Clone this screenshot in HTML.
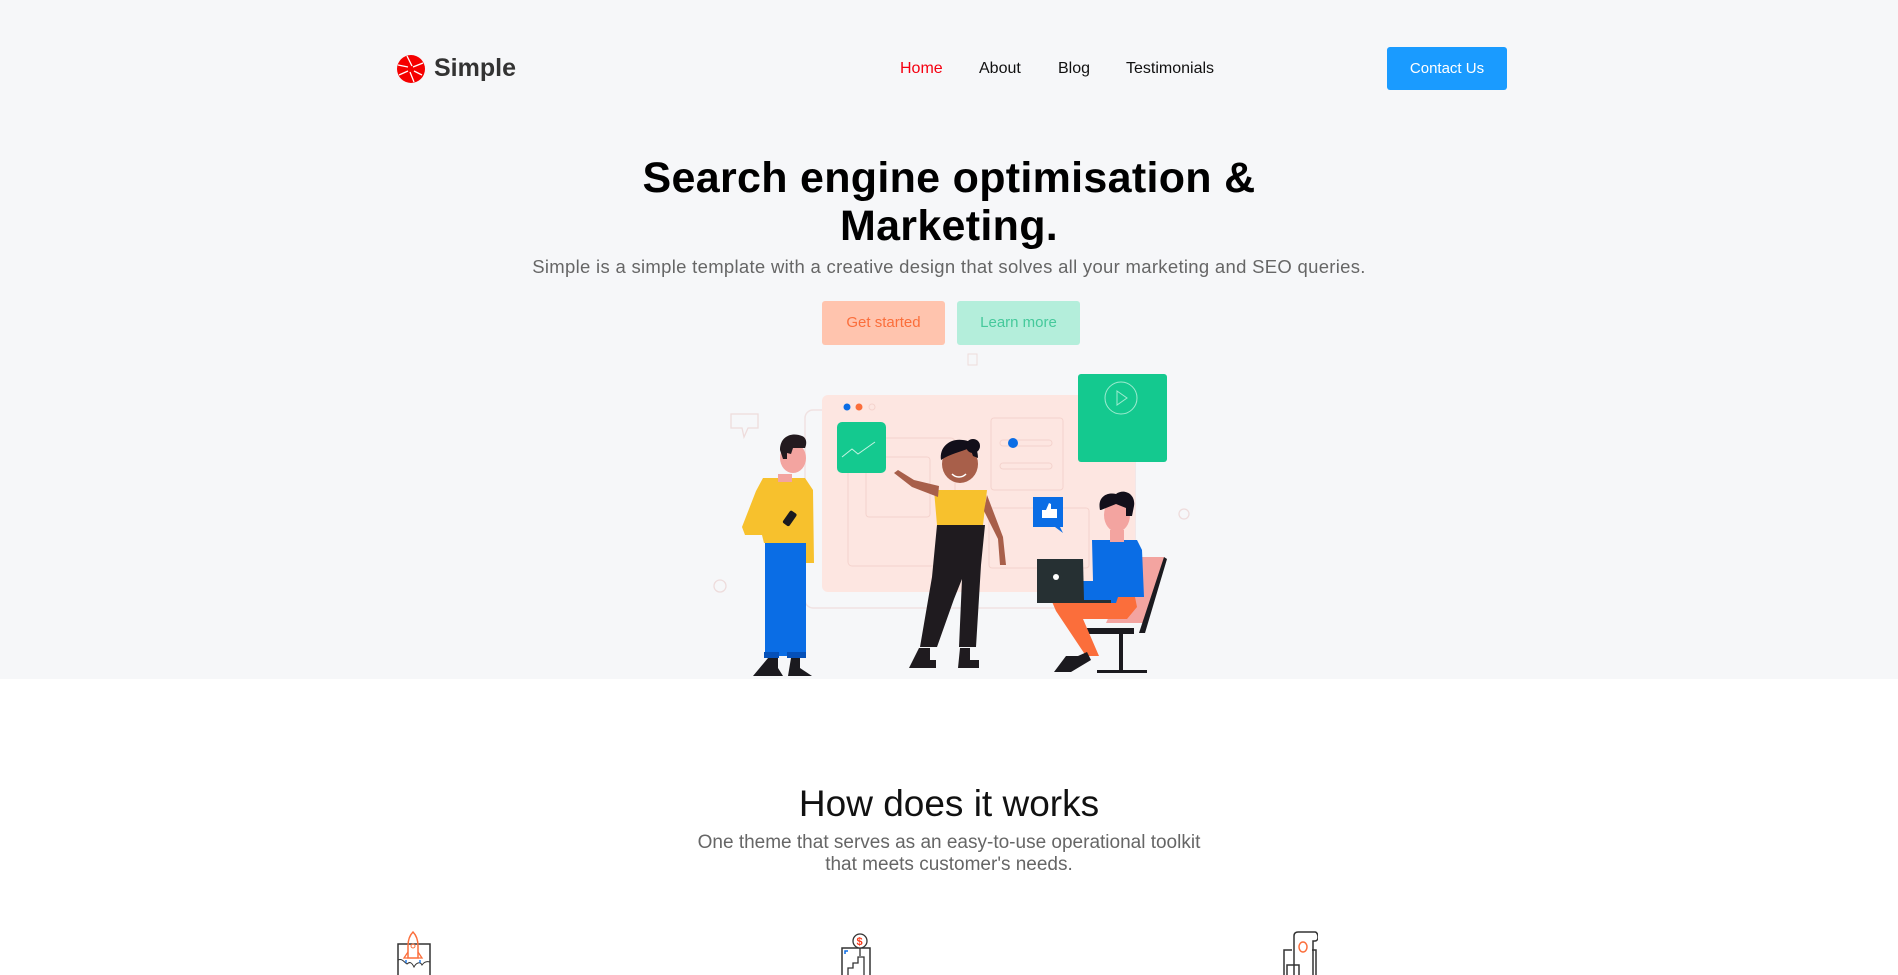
<!DOCTYPE html>
<html><head><meta charset="utf-8"><style>
*{margin:0;padding:0;box-sizing:border-box}
body{width:1898px;height:975px;overflow:hidden;background:#fff;font-family:"Liberation Sans",sans-serif;position:relative}
.hero{position:absolute;left:0;top:0;width:1898px;height:679px;background:#f6f7f9}
.a{position:absolute}
.nav{font-size:16px;color:#111;top:60px}
h1{position:absolute;left:0;width:1898px;top:154px;text-align:center;font-size:43px;line-height:48px;font-weight:bold;color:#000;letter-spacing:0.3px}
.sub{left:0;width:1898px;text-align:center;top:256px;font-size:18.5px;letter-spacing:0.3px;color:#666}
.btn{top:301px;height:44px;width:123px;text-align:center;line-height:44px;font-size:15px;border-radius:3px}
</style></head><body>
<div class="hero"></div>
<svg class="a" style="left:396px;top:54px" width="30" height="30" viewBox="0 0 30 30"><circle cx="15" cy="15" r="14" fill="#f50000"/><g stroke="#fff" stroke-width="1.3"><line x1="11" y1="2" x2="16" y2="12"/><line x1="27" y1="9" x2="17" y2="13"/><line x1="26" y1="21" x2="18" y2="17"/><line x1="18" y1="28" x2="14" y2="18"/><line x1="3" y1="21" x2="12" y2="17"/><line x1="2" y1="11" x2="12" y2="13"/></g></svg>
<div class="a" style="left:434px;top:54px;font-size:25px;font-weight:bold;color:#333">Simple</div>
<div class="a nav" style="left:900px;color:#f50010">Home</div>
<div class="a nav" style="left:979px">About</div>
<div class="a nav" style="left:1058px">Blog</div>
<div class="a nav" style="left:1126px">Testimonials</div>
<div class="a" style="left:1387px;top:47px;width:120px;height:43px;background:#1a9bff;border-radius:3px;color:#fff;font-size:15px;text-align:center;line-height:43px">Contact Us</div>
<h1>Search engine optimisation &amp;<br>Marketing.</h1>
<div class="a sub">Simple is a simple template with a creative design that solves all your marketing and SEO queries.</div>
<div class="a btn" style="left:822px;background:#ffc4ae;color:#fb6e3b">Get started</div>
<div class="a btn" style="left:957px;background:#b4eedb;color:#45c99b">Learn more</div>
<svg class="a" style="left:700px;top:340px" width="500" height="340" viewBox="0 -20 500 340">
<rect x="268" y="-6" width="9" height="11" fill="none" stroke="#eedcdc" stroke-width="1"/>
<rect x="105" y="50" width="330" height="198" rx="8" fill="none" stroke="#f0e2e2" stroke-width="1.5"/>
<rect x="122" y="35" width="313" height="197" rx="6" fill="#fde6e1"/>
<rect x="148" y="78" width="107" height="128" rx="4" fill="none" stroke="#f4d3cd"/>
<rect x="166" y="97" width="64" height="60" rx="3" fill="none" stroke="#f4d3cd"/>
<rect x="291" y="58" width="72" height="72" rx="3" fill="none" stroke="#f4d3cd"/>
<rect x="300" y="80" width="52" height="6" rx="3" fill="none" stroke="#f4d3cd"/>
<rect x="300" y="103" width="52" height="6" rx="3" fill="none" stroke="#f4d3cd"/>
<rect x="289" y="148" width="100" height="60" rx="3" fill="none" stroke="#f4d3cd"/>
<circle cx="313" cy="83" r="5" fill="#0a6de5"/>
<circle cx="147" cy="47" r="3.5" fill="#0a6de5"/><circle cx="159" cy="47" r="3.5" fill="#fb6e3b"/><circle cx="172" cy="47" r="3" fill="none" stroke="#f4d3cd"/>
<path d="M31 54h27v14h-10l-4 9-2-9h-11z" fill="none" stroke="#eedcdc" stroke-width="1.3"/>
<circle cx="20" cy="226" r="6" fill="none" stroke="#eedcdc" stroke-width="1.3"/>
<circle cx="484" cy="154" r="5" fill="none" stroke="#eedcdc" stroke-width="1.3"/>
<rect x="137" y="62" width="49" height="51" rx="5" fill="#14c98f"/>
<path d="M142 97l10-8 6 5 17-12" fill="none" stroke="#c6f3e3" stroke-width="1"/>
<rect x="378" y="14" width="89" height="88" rx="3" fill="#14c98f"/>
<circle cx="421" cy="38" r="16" fill="none" stroke="#9eebd0" stroke-width="1"/><path d="M417 31l10 7-10 7z" fill="none" stroke="#9eebd0"/>
<path d="M333 137h30v30h-3l3 6-8-6h-22z" fill="#0a6de5"/><path d="M342 150h4l3-7 2 1v5h6v9h-15z" fill="#fff"/>
<path d="M65 183h41v113h-41z" fill="#0a6de5"/><rect x="64" y="292" width="15" height="6" fill="#0550b8"/><rect x="87" y="292" width="19" height="6" fill="#0550b8"/>
<path d="M68 298h10v10l5 8h-30z M91 298h9v10l12 8h-24z" fill="#1b1a1f"/>
<path d="M63 118h42l8 12 1 73h-8v-20h-42l-2-8h-17l-3-8 14-36z" fill="#f7c12d"/>
<path d="M78 114h14v8h-14z" fill="#f3a4a0"/>
<ellipse cx="93" cy="98" rx="13" ry="15" fill="#f3a4a0"/>
<path d="M80 90c0-14 12-18 22-14 5 2 5 8 3 12l-12 0-2 6-4-1v6h-4z" fill="#231a1f"/>
<rect x="86" y="151" width="8" height="15" rx="2" transform="rotate(35 90 158)" fill="#1b1a1f"/>
<path d="M234 130h53l-4 35h-46z" fill="#f7c12d"/>
<path d="M287 135l16 42 3 28-6 0-2-26-14-28z" fill="#a85f4a"/>
<path d="M238 137l-26-10-18-14 4-3 16 10 25 6z" fill="#a85f4a"/>
<path d="M237 165h48l-4 40-5 82h-17l3-68-8 20-17 48h-17l12-70z" fill="#1f1b1f"/>
<path d="M219 288h11v12h6v8h-27zM260 288h10v12h9v8h-21z" fill="#1f1b1f"/>
<ellipse cx="260" cy="104" rx="18" ry="19" fill="#a85f4a"/>
<path d="M241 100c-2-14 10-22 22-20 10 1 15 8 15 18l-5-2-3-8c-10 4-20 6-29 12z" fill="#120f1a"/>
<circle cx="273" cy="86" r="7" fill="#120f1a"/>
<path d="M252 114c4 4 10 4 14 0" stroke="#fff" stroke-width="1.5" fill="none"/>
<path d="M436 197h28l-20 76h-4l3-10h-37z" fill="#f3a4a0"/>
<path d="M464 197l3 2-22 74h-6z" fill="#1b1a1f"/>
<rect x="382" y="268" width="52" height="6" fill="#1b1a1f"/><rect x="419" y="272" width="4" height="40" fill="#1b1a1f"/><rect x="397" y="310" width="50" height="3" fill="#1b1a1f"/>
<path d="M350 237h85l2 10-10 12h-44l16 37h-13l-30-45z" fill="#fb6e3b"/>
<path d="M366 296h12l9-4 4 8-20 12h-17z" fill="#1b1a1f"/>
<path d="M392 180h45l5 10 2 47h-26l-2 6h-32l-5-22 14 0z" fill="#0a6de5"/>
<rect x="410" y="170" width="14" height="12" fill="#f3a4a0"/>
<ellipse cx="417" cy="155" rx="13" ry="17" fill="#f3a4a0"/>
<path d="M400 150c-3-14 8-18 16-16 8-6 20 0 18 12l-2 10-6 0 0-8-10-4-15 6z" fill="#120f1a"/>
<path d="M337 199h46l1 41h-47z" fill="#263033"/><path d="M337 240h74v3h-74z" fill="#263033"/><circle cx="356" cy="217" r="3" fill="#fff"/>
</svg>
<div class="a" style="left:0;width:1898px;top:783px;text-align:center;font-size:37px;color:#111">How does it works</div>
<div class="a" style="left:0;width:1898px;top:832px;text-align:center;font-size:19px;line-height:22px;color:#666">One theme that serves as an easy-to-use operational toolkit<br>that meets customer's needs.</div>
<svg class="a" style="left:396px;top:930px" width="36" height="45" viewBox="0 0 36 45"><path d="M2 45V14h32v31" fill="none" stroke="#333" stroke-width="1.5"/><path d="M2 30c4-2 6 2 9 4 3-3 5-1 7 3 2-4 6-6 8-2 2-3 5-4 8-3" fill="none" stroke="#333" stroke-width="1"/><path d="M17 2c4 4 5 10 5 14v12h-10V16c0-4 1-10 5-14z" fill="none" stroke="#fb6e3b" stroke-width="1.5"/><circle cx="17" cy="16" r="2" fill="none" stroke="#fb6e3b"/><path d="M12 22l-4 6h4M22 22l4 6h-4" fill="none" stroke="#fb6e3b" stroke-width="1.3"/><path d="M10 30v3M24 30v3" stroke="#0a6de5" stroke-width="1.3"/></svg>
<svg class="a" style="left:840px;top:930px" width="36" height="45" viewBox="0 0 36 45"><path d="M2 45V18h28v27" fill="none" stroke="#333" stroke-width="1.5"/><circle cx="20" cy="11" r="7" fill="#fff" stroke="#333" stroke-width="1.3"/><text x="16.5" y="15" font-size="11" font-weight="bold" fill="#fb3a1b" font-family="Liberation Sans">$</text><path d="M20 18v8M8 45V38h5v-5h5v-6h6v18" fill="none" stroke="#333" stroke-width="1.3"/><path d="M5 24v-3h3" stroke="#0a6de5" stroke-width="1.5" fill="none"/></svg>
<svg class="a" style="left:1282px;top:930px" width="36" height="45" viewBox="0 0 36 45"><path d="M12 45V6c0-3 2-4 4-4h17c2 0 3 3 3 5s-1 4-3 4h-2v34M2 45V20h8M30 20h4v25" fill="none" stroke="#333" stroke-width="1.5"/><path d="M5 45V35h12v10" fill="none" stroke="#333" stroke-width="1.5"/><ellipse cx="21" cy="17" rx="4" ry="5" fill="none" stroke="#fb6e3b" stroke-width="1.5"/></svg>
</body></html>
